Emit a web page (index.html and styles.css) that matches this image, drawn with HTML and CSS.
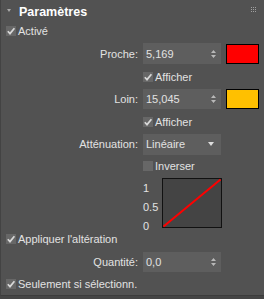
FILE: index.html
```html
<!DOCTYPE html>
<html lang="fr">
<head>
    <meta charset="UTF-8">
    <title>Paramètres</title>
    <link rel="stylesheet" href="styles.css">
</head>
<body>
    <div class="panel">
        <div class="head">
            <span class="caret"></span>
            <span class="title">Paramètres</span>
            <svg class="grip" width="6" height="6" viewBox="0 0 6 6">
                <g fill="#a0a0a0">
                    <rect x="0" y="0" width="1" height="1"/><rect x="2" y="0" width="1" height="1"/><rect x="4" y="0" width="1" height="1"/>
                    <rect x="0" y="2" width="1" height="1"/><rect x="2" y="2" width="1" height="1"/><rect x="4" y="2" width="1" height="1"/>
                    <rect x="0" y="4" width="1" height="1"/><rect x="2" y="4" width="1" height="1"/><rect x="4" y="4" width="1" height="1"/>
                </g>
            </svg>
        </div>

        <div class="row check-row h18">
            <span class="box"><svg width="10" height="10" viewBox="0 0 10 10"><path d="M1.8 5.2 L4 7.6 L8.4 2.2" /></svg></span>
            <span>Activé</span>
        </div>

        <div class="row field h27">
            <span class="label">Proche:</span>
            <div class="input">
                <span>5,169</span>
                <svg class="spin" width="5" height="8" viewBox="0 0 5 8"><path d="M0 3 L2.5 0 L5 3 Z M0 5 L5 5 L2.5 8 Z"/></svg>
            </div>
            <span class="swatch red"></span>
        </div>

        <div class="row field h19">
            <span class="label"></span>
            <span class="box"><svg width="10" height="10" viewBox="0 0 10 10"><path d="M1.8 5.2 L4 7.6 L8.4 2.2" /></svg></span>
            <span class="check-text">Afficher</span>
        </div>

        <div class="row field h26">
            <span class="label">Loin:</span>
            <div class="input short">
                <span>15,045</span>
                <svg class="spin" width="5" height="8" viewBox="0 0 5 8"><path d="M0 3 L2.5 0 L5 3 Z M0 5 L5 5 L2.5 8 Z"/></svg>
            </div>
            <span class="swatch yellow"></span>
        </div>

        <div class="row field h19">
            <span class="label"></span>
            <span class="box"><svg width="10" height="10" viewBox="0 0 10 10"><path d="M1.8 5.2 L4 7.6 L8.4 2.2" /></svg></span>
            <span class="check-text">Afficher</span>
        </div>

        <div class="row field h26">
            <span class="label">Atténuation:</span>
            <div class="input">
                <span>Linéaire</span>
                <svg class="drop" width="6" height="4" viewBox="0 0 6 4"><path d="M0 0 L6 0 L3 4 Z"/></svg>
            </div>
        </div>

        <div class="row field h18">
            <span class="label"></span>
            <span class="box"></span>
            <span class="check-text">Inverser</span>
        </div>

        <div class="row graph-row">
            <div class="axis">
                <span>1</span>
                <span>0.5</span>
                <span>0</span>
            </div>
            <svg class="graph" width="60" height="50" viewBox="0 0 60 50">
                <rect x="0.5" y="0.5" width="59" height="49" fill="#444444" stroke="#111111"/>
                <path d="M1.5 48.5 L58.5 1.5" stroke="#ff0000" stroke-width="2" fill="none"/>
            </svg>
        </div>

        <div class="row check-row h18">
            <span class="box"><svg width="10" height="10" viewBox="0 0 10 10"><path d="M1.8 5.2 L4 7.6 L8.4 2.2" /></svg></span>
            <span>Appliquer l'altération</span>
        </div>

        <div class="row field h27">
            <span class="label">Quantité:</span>
            <div class="input short">
                <span>0,0</span>
                <svg class="spin" width="5" height="8" viewBox="0 0 5 8"><path d="M0 3 L2.5 0 L5 3 Z M0 5 L5 5 L2.5 8 Z"/></svg>
            </div>
        </div>

        <div class="row check-row h17">
            <span class="box"><svg width="10" height="10" viewBox="0 0 10 10"><path d="M1.8 5.2 L4 7.6 L8.4 2.2" /></svg></span>
            <span>Seulement si sélectionn.</span>
        </div>
    </div>
</body>
</html>
```

FILE: styles.css
```css
body {
    margin: 0;
    background: #454545;
    font-family: "Liberation Sans", Arial, sans-serif;
    font-size: 11px;
    color: #e2e2e2;
}
.panel {
    width: 263px;
    height: 295px;
    background: #525252;
    border-left: 1px solid #434343;
    border-bottom: 1px solid #3c3c3c;
}
.head {
    height: 22px;
    display: flex;
    align-items: center;
    padding-left: 6px;
    padding-right: 7px;
}
.caret {
    width: 0;
    height: 0;
    border-left: 2.5px solid transparent;
    border-right: 2.5px solid transparent;
    border-top: 3px solid #a8a8a8;
    margin-top: -1px;
}
.title {
    margin-left: 8px;
    font-size: 12.5px;
    font-weight: bold;
    color: #ffffff;
    flex: 1;
    margin-top: 1px;
}
.grip {
    margin-top: -3px;
}
.row {
    display: flex;
    align-items: center;
}
.h17 { height: 17px; }
.h18 { height: 18px; }
.h19 { height: 19px; }
.h26 { height: 26px; }
.h27 { height: 27px; }
.check-row {
    padding-left: 5px;
}
.box {
    width: 10px;
    height: 10px;
    background: #676767;
    margin-right: 2px;
    display: flex;
}
.box path {
    fill: none;
    stroke: #d8d8d8;
    stroke-width: 1.7;
}
.label {
    width: 137px;
    text-align: right;
    margin-right: 5px;
}
.input {
    width: 78px;
    height: 21px;
    background: #5e5e5e;
    display: flex;
    align-items: center;
    justify-content: space-between;
    padding: 0 5px 0 3px;
    box-sizing: border-box;
}
.input.short {
    height: 20px;
}
.spin path {
    fill: #b8b8b8;
}
.drop {
    margin-right: 2px;
}
.drop path {
    fill: #dddddd;
}
.swatch {
    width: 33px;
    height: 20px;
    margin-left: 5px;
    border: 1px solid #000000;
    box-sizing: border-box;
}
.red {
    background: #ff0000;
}
.yellow {
    background: #ffc000;
}
.check-text {
    margin-left: 0;
}
.graph-row {
    height: 55px;
    align-items: flex-start;
    padding-left: 142px;
}
.axis {
    width: 19px;
    display: flex;
    flex-direction: column;
    padding-top: 4px;
    line-height: 19px;
}
.graph {
    margin-top: 3px;
}
```
